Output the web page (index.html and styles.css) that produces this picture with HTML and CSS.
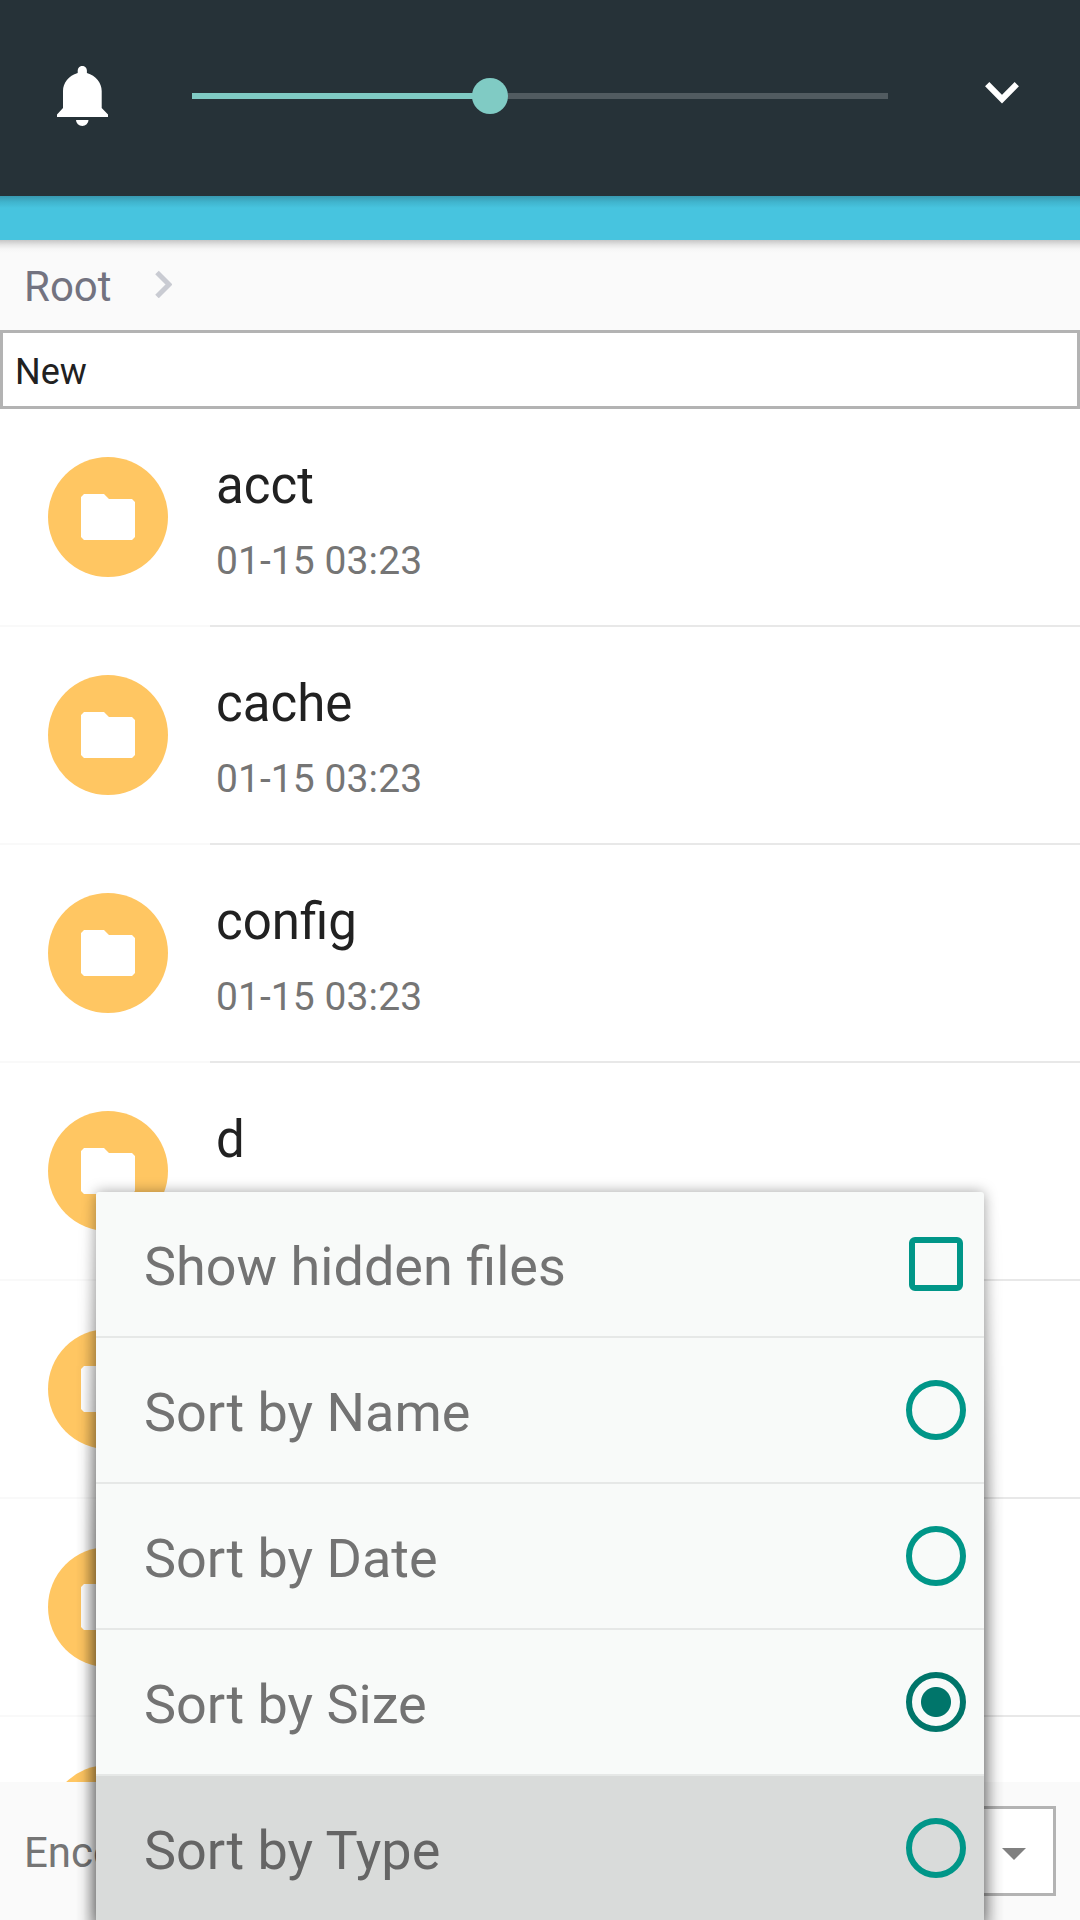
FILE: index.html
```html
<!DOCTYPE html>
<html lang="en">
<head>
<meta charset="utf-8">
<title>Files</title>
<link rel="stylesheet" href="styles.css">
</head>
<body>
<svg class="defs" aria-hidden="true">
  <symbol id="folder" viewBox="0 0 54 46"><path d="M3 0H23L28 5H51L54 8V43L51 46H3L0 43V3Z" fill="#fff"/></symbol>
</svg>
<div class="screen">
  <header class="volume">
    <svg class="bell" viewBox="0 0 51 60"><path d="M20.700 7V4.500a4.600 4.600 0 0 1 9.200 0V7C39 9.500 44.700 17 44.700 25V42L51 48.500V51H0V48.500L6 42V25C6 17 11.600 9.500 20.700 7ZM19 54H31.500a6.250 6 0 0 1-12.500 0Z" fill="#fff"/></svg>
    <div class="slider"><div class="level"></div><div class="thumb"></div></div>
    <svg class="expand" viewBox="0 0 34 22"><path d="M2.200 2.200L17 17.200L31.800 2.200" fill="none" stroke="#fff" stroke-width="6"/></svg>
  </header>
  <div class="toolbar"></div>
  <nav class="crumbs">
    <span>Root</span>
    <svg class="sep" viewBox="0 0 17 28"><path d="M2 2.500L14 14.500L2 26.500" fill="none" stroke="#c9cbd2" stroke-width="5"/></svg>
  </nav>
  <div class="field">New</div>
  <main class="list">
    <div class="row"><div class="disc"><svg><use href="#folder"/></svg></div><div class="info"><div class="name">acct</div><div class="date">01-15 03:23</div></div></div>
    <div class="row"><div class="disc"><svg><use href="#folder"/></svg></div><div class="info"><div class="name">cache</div><div class="date">01-15 03:23</div></div></div>
    <div class="row"><div class="disc"><svg><use href="#folder"/></svg></div><div class="info"><div class="name">config</div><div class="date">01-15 03:23</div></div></div>
    <div class="row"><div class="disc"><svg><use href="#folder"/></svg></div><div class="info"><div class="name">d</div></div></div>
    <div class="row"><div class="disc"><svg><use href="#folder"/></svg></div></div>
    <div class="row"><div class="disc"><svg><use href="#folder"/></svg></div></div>
    <div class="row"><div class="disc"><svg><use href="#folder"/></svg></div></div>
  </main>
  <footer class="footer">
    <span>Enco</span>
    <div class="select"><i class="caret"></i></div>
  </footer>
  <div class="menu">
    <div class="item"><span>Show hidden files</span><i class="check"></i></div>
    <div class="item"><span>Sort by Name</span><i class="radio"></i></div>
    <div class="item"><span>Sort by Date</span><i class="radio"></i></div>
    <div class="item"><span>Sort by Size</span><i class="radio on"></i></div>
    <div class="item pressed"><span>Sort by Type</span><i class="radio"></i></div>
  </div>
</div>
</body>
</html>
```
FILE: styles.css
```css
* { box-sizing: border-box; }
body { margin: 0; font-family: Roboto, sans-serif; color: #212121; }
.defs { position: absolute; width: 0; height: 0; }
.screen { position: relative; width: 1080px; height: 1920px; overflow: hidden; background: #fff; display: flex; flex-direction: column; }

.volume { height: 196px; flex: none; background: #263238; display: flex; align-items: flex-start; padding: 0 61px 0 57px; }
.bell { width: 51px; height: 60px; margin-top: 66px; }
.slider { position: relative; width: 696px; height: 6px; margin: 93px 0 0 84px; background: #515b60; }
.level { width: 298px; height: 6px; background: #80cbc4; }
.thumb { position: absolute; left: 280px; top: -15px; width: 36px; height: 36px; border-radius: 50%; background: #80cbc4; }
.expand { width: 34px; height: 22px; margin: 82px 0 0 auto; }

.toolbar { height: 44px; flex: none; background: linear-gradient(#3898b0, #40b4cd 6px, #47c4df 12px); }

.crumbs { height: 90px; flex: none; background: linear-gradient(#c6c6c6, #e6e6e6 5px, #f6f6f6 9px, #fafafa 13px); display: flex; align-items: center; padding: 3px 24px 5px; font-size: 42px; color: #737380; gap: 43px; }
.crumbs span { line-height: 50px; padding-top: 6px; }
.sep { width: 17px; height: 28px; }

.field { height: 79px; flex: none; border: 3px solid #b3b3b3; padding: 2px 12px 0; font-size: 36px; line-height: 75px; }

.list { height: 1373px; flex: none; overflow: hidden; }
.row { height: 218px; display: flex; padding: 48px 48px 0; gap: 48px; background: linear-gradient(to right, #f9f9f9 210px, #e8e8e8 210px) left bottom / 100% 2px no-repeat; }
.disc { width: 120px; height: 120px; flex: none; border-radius: 50%; background: #ffc662; padding: 37px 33px; }
.disc svg { display: block; width: 54px; height: 46px; }
.name { font-size: 51px; line-height: 60px; margin-top: -1px; }
.date { font-size: 39px; line-height: 46px; margin-top: 22px; color: #757575; letter-spacing: .08px; }

.footer { height: 138px; flex: none; background: #fafafa; display: flex; align-items: center; justify-content: space-between; padding: 0 24px; font-size: 42px; color: #757575; }
.footer span { padding-top: 2px; }
.select { width: 760px; height: 90px; border: 3px solid #b3b3b3; background: #fff; display: flex; align-items: center; justify-content: flex-end; padding: 6px 27px 0 0; }
.caret { width: 24px; height: 12px; background: #808080; clip-path: polygon(0 0, 100% 0, 50% 100%); }

.menu { position: absolute; left: 96px; top: 1192px; width: 888px; border-radius: 3px 3px 0 0; background: #f8faf9; box-shadow: 0 0 14px rgba(0,0,0,.36); }
.menu::before, .menu::after { content: ""; position: absolute; top: 4px; bottom: 0; width: 20px; }
.menu::before { right: 100%; background: linear-gradient(to left, rgba(0,0,0,.3), rgba(0,0,0,.18) 6px, rgba(0,0,0,.05) 13px, transparent); mask-image: linear-gradient(transparent, #000 340px); }
.menu::after { left: 100%; background: linear-gradient(to right, rgba(0,0,0,.26), rgba(0,0,0,.15) 6px, rgba(0,0,0,.05) 13px, transparent); mask-image: linear-gradient(transparent, #000 340px); }
.item { height: 146px; display: flex; align-items: center; justify-content: space-between; border-bottom: 2px solid #e6e8e7; padding: 0 18px 0 48px; font-size: 54px; color: #737373; }
.item span { padding-top: 4px; }
.pressed { height: 144px; border-bottom: 0; background: #d9dbda; color: #656565; }
.check { width: 54px; height: 54px; margin-right: 3px; border: 6px solid #009688; border-radius: 6px; }
.radio { width: 60px; height: 60px; border: 6px solid #009688; border-radius: 50%; }
.on { border-color: #00756a; background: radial-gradient(circle, #00756a 14.500px, transparent 15.500px); }
```
